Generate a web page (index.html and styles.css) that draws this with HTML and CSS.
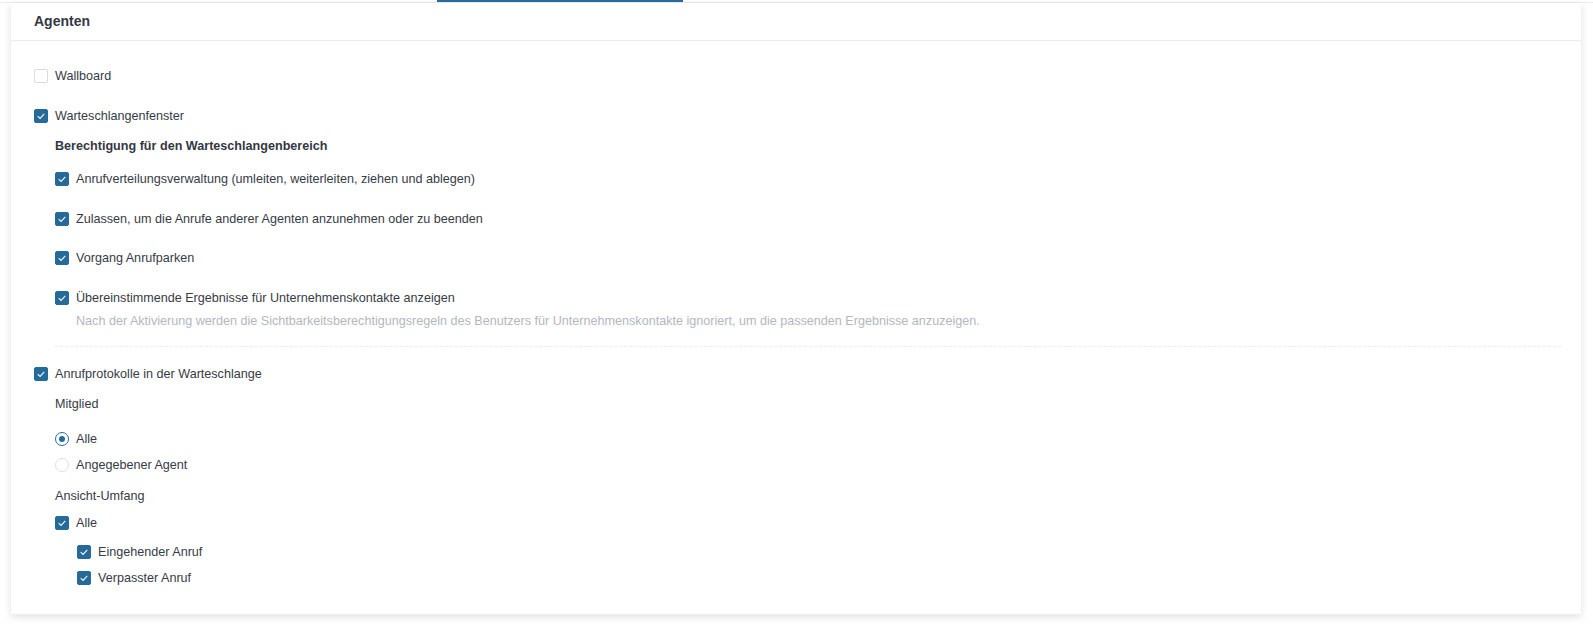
FILE: index.html
```html
<!DOCTYPE html>
<html lang="de">
<head>
    <meta charset="UTF-8">
    <title>Agenten</title>
    <link rel="stylesheet" href="styles.css">
</head>
<body>
    <div class="tab-line"><span class="tab-active"></span></div>
    <div class="card">
        <div class="card-header">Agenten</div>
        <div class="card-body">
            <label class="opt row-wallboard"><span class="box"></span>Wallboard</label>

            <label class="opt row-queue"><span class="box checked"><svg viewBox="0 0 14 14"><polyline points="3.2,7.2 5.9,9.8 10.8,4.6"/></svg></span>Warteschlangenfenster</label>
            <div class="group">
                <div class="group-title">Berechtigung für den Warteschlangenbereich</div>
                <label class="opt row-perm first"><span class="box checked"><svg viewBox="0 0 14 14"><polyline points="3.2,7.2 5.9,9.8 10.8,4.6"/></svg></span>Anrufverteilungsverwaltung (umleiten, weiterleiten, ziehen und ablegen)</label>
                <label class="opt row-perm"><span class="box checked"><svg viewBox="0 0 14 14"><polyline points="3.2,7.2 5.9,9.8 10.8,4.6"/></svg></span>Zulassen, um die Anrufe anderer Agenten anzunehmen oder zu beenden</label>
                <label class="opt row-perm"><span class="box checked"><svg viewBox="0 0 14 14"><polyline points="3.2,7.2 5.9,9.8 10.8,4.6"/></svg></span>Vorgang Anrufparken</label>
                <label class="opt row-perm"><span class="box checked"><svg viewBox="0 0 14 14"><polyline points="3.2,7.2 5.9,9.8 10.8,4.6"/></svg></span>Übereinstimmende Ergebnisse für Unternehmenskontakte anzeigen</label>
                <div class="hint">Nach der Aktivierung werden die Sichtbarkeitsberechtigungsregeln des Benutzers für Unternehmenskontakte ignoriert, um die passenden Ergebnisse anzuzeigen.</div>
            </div>

            <label class="opt row-logs"><span class="box checked"><svg viewBox="0 0 14 14"><polyline points="3.2,7.2 5.9,9.8 10.8,4.6"/></svg></span>Anrufprotokolle in der Warteschlange</label>
            <div class="group">
                <div class="sub-title">Mitglied</div>
                <label class="opt row-radio first"><span class="radio on"></span>Alle</label>
                <label class="opt row-radio"><span class="radio"></span>Angegebener Agent</label>

                <div class="sub-title scope">Ansicht-Umfang</div>
                <label class="opt row-all"><span class="box checked"><svg viewBox="0 0 14 14"><polyline points="3.2,7.2 5.9,9.8 10.8,4.6"/></svg></span>Alle</label>
                <div class="subgroup">
                    <label class="opt row-call first"><span class="box checked"><svg viewBox="0 0 14 14"><polyline points="3.2,7.2 5.9,9.8 10.8,4.6"/></svg></span>Eingehender Anruf</label>
                    <label class="opt row-call"><span class="box checked"><svg viewBox="0 0 14 14"><polyline points="3.2,7.2 5.9,9.8 10.8,4.6"/></svg></span>Verpasster Anruf</label>
                </div>
            </div>
        </div>
    </div>
</body>
</html>
```

FILE: styles.css
```css
body {
    margin: 0;
    background-color: #fff;
    font-family: "Liberation Sans", Arial, sans-serif;
    font-size: 12.6px;
    color: #363b46;
}
.tab-line {
    height: 2px;
    border-bottom: 1px solid #ececec;
    display: flex;
}
.tab-active {
    margin-left: 437px;
    width: 246px;
    height: 2px;
    background-color: #2b6a98;
}
.card {
    margin: 0 12px 10px 11px;
    background-color: #fff;
    border-bottom: 1px solid #ededed;
    box-shadow: 0 2px 8px rgba(0, 0, 0, 0.12);
}
.card-header {
    height: 37px;
    line-height: 37px;
    padding-left: 23px;
    font-size: 14px;
    font-weight: bold;
    color: #333843;
    border-bottom: 1px solid #ebebeb;
}
.card-body {
    padding: 25px 20px 26px 23px;
}
.opt {
    display: flex;
    align-items: center;
    height: 20px;
    line-height: 20px;
    cursor: pointer;
}
.box {
    flex: none;
    width: 12px;
    height: 12px;
    border: 1px solid #dcdcdc;
    border-radius: 2px;
    margin-right: 7px;
    background-color: #fff;
    display: flex;
}
.box.checked {
    background-color: #266a99;
    border-color: #266a99;
}
.box svg {
    width: 12px;
    height: 12px;
}
.box polyline {
    fill: none;
    stroke: #fff;
    stroke-width: 1.2;
}
.radio {
    flex: none;
    width: 12px;
    height: 12px;
    border: 1px solid #dedede;
    border-radius: 50%;
    margin-right: 7px;
    display: flex;
    align-items: center;
    justify-content: center;
}
.radio.on {
    border-color: #266a99;
}
.radio.on::after {
    content: "";
    width: 6px;
    height: 6px;
    border-radius: 50%;
    background-color: #266a99;
}
.row-queue {
    margin-top: 20px;
}
.group {
    margin-left: 21px;
}
.group-title {
    margin-top: 10px;
    height: 20px;
    line-height: 20px;
    font-weight: bold;
    color: #333843;
}
.row-perm {
    margin-top: 19.5px;
}
.row-perm.first {
    margin-top: 13px;
}
.hint {
    margin-top: 3px;
    line-height: 20px;
    color: #b3b7bd;
    padding-left: 21px;
    padding-bottom: 15px;
    border-bottom: 1px dashed #ececec;
}
.row-logs {
    margin-top: 17px;
}
.sub-title {
    margin-top: 10px;
    height: 20px;
    line-height: 20px;
}
.row-radio {
    margin-top: 6px;
}
.row-radio.first {
    margin-top: 15px;
}
.sub-title.scope {
    margin-top: 11px;
}
.row-all {
    margin-top: 7px;
}
.subgroup {
    margin-left: 22px;
}
.row-call {
    margin-top: 6px;
}
.row-call.first {
    margin-top: 9px;
}
```
